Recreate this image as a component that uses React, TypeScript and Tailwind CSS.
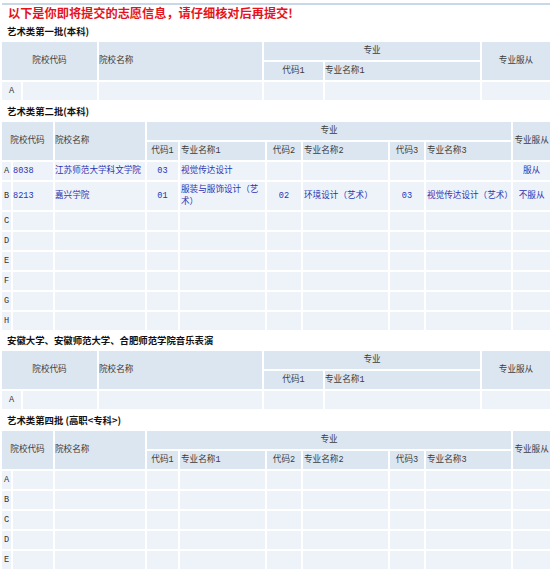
import React from "react";

const CJK = { fontFamily: '"Noto Sans CJK SC", "Noto Sans", sans-serif' };
const TBL = { fontFamily: '"Liberation Mono", "Noto Sans CJK SC", monospace' };

const th = "bg-[#dce6f1] p-0 font-normal text-[#3c3c3c] align-middle";
const td = "bg-[#eef3f9] p-0 align-middle text-[#2b33b3]";

type Major = [string, string];
type Pick = { label: string; code?: string; name?: string; majors?: Major[]; fu?: string; tall?: boolean };

const second: Pick[] = [
  { label: "A", code: "8038", name: "江苏师范大学科文学院", majors: [["03", "视觉传达设计"], ["", ""], ["", ""]], fu: "服从" },
  {
    label: "B",
    code: "8213",
    name: "嘉兴学院",
    majors: [["01", "服装与服饰设计（艺术）"], ["02", "环境设计（艺术）"], ["03", "视觉传达设计（艺术）"]],
    fu: "不服从",
    tall: true,
  },
  { label: "C" },
  { label: "D" },
  { label: "E" },
  { label: "F" },
  { label: "G" },
  { label: "H" },
];

const fourth: Pick[] = [{ label: "A" }, { label: "B" }, { label: "C" }, { label: "D" }, { label: "E" }];

const Heading = ({ children, h }: { children: React.ReactNode; h: string }) => (
  <div className={`${h} flex items-center pl-[7px] text-[9.4px] font-bold text-[#111]`} style={CJK}>
    {children}
  </div>
);

// one major per school
const SingleTable = () => (
  <table className="w-full table-fixed border-separate border-spacing-[2px] text-[8.6px] leading-[12px]" style={TBL}>
    <colgroup>
      <col className="w-[19px]" />
      <col className="w-[74px]" />
      <col className="w-[163px]" />
      <col className="w-[59px]" />
      <col className="w-[155px]" />
      <col className="w-[68px]" />
    </colgroup>
    <thead>
      <tr className="h-[18px]">
        <th colSpan={2} rowSpan={2} className={`${th} text-center`}>院校代码</th>
        <th rowSpan={2} className={`${th} text-left`}>院校名称</th>
        <th colSpan={2} className={`${th} text-center`}>专业</th>
        <th rowSpan={2} className={`${th} text-center`}>专业服从</th>
      </tr>
      <tr className="h-[18px]">
        <th className={`${th} text-center`}>代码1</th>
        <th className={`${th} text-left`}>专业名称1</th>
      </tr>
    </thead>
    <tbody>
      <tr className="h-[18px]">
        <td className={`${td} text-center !text-[#333]`}>A</td>
        <td className={td}></td>
        <td className={td}></td>
        <td className={td}></td>
        <td className={td}></td>
        <td className={td}></td>
      </tr>
    </tbody>
  </table>
);

// three majors per school
const TripleTable = ({ rows }: { rows: Pick[] }) => (
  <table className="w-full table-fixed border-separate border-spacing-[2px] text-[8.6px] leading-[12px]" style={TBL}>
    <colgroup>
      <col className="w-[9px]" />
      <col className="w-[40px]" />
      <col className="w-[90px]" />
      <col className="w-[31px]" />
      <col className="w-[85px]" />
      <col className="w-[34px]" />
      <col className="w-[85px]" />
      <col className="w-[34px]" />
      <col className="w-[85px]" />
      <col className="w-[37px]" />
    </colgroup>
    <thead>
      <tr className="h-[18px]">
        <th colSpan={2} rowSpan={2} className={`${th} text-center`}>院校代码</th>
        <th rowSpan={2} className={`${th} text-left`}>院校名称</th>
        <th colSpan={6} className={`${th} text-center`}>专业</th>
        <th rowSpan={2} className={`${th} text-center`}>专业服从</th>
      </tr>
      <tr className="h-[18px]">
        {[1, 2, 3].map((n) => (
          <React.Fragment key={n}>
            <th className={`${th} text-center whitespace-nowrap`}>代码{n}</th>
            <th className={`${th} text-left pl-[1px]`}>专业名称{n}</th>
          </React.Fragment>
        ))}
      </tr>
    </thead>
    <tbody>
      {rows.map((r) => (
        <tr key={r.label} className={r.tall ? "h-[28px]" : "h-[18px]"}>
          <td className={`${td} text-center !text-[#333]`}>{r.label}</td>
          <td className={td}>{r.code}</td>
          <td className={`${td} whitespace-nowrap`}>{r.name}</td>
          {(r.majors ?? [["", ""], ["", ""], ["", ""]]).map(([c, n], i) => (
            <React.Fragment key={i}>
              <td className={`${td} text-center`}>{c}</td>
              <td className={`${td} pl-[1px]`}>{n}</td>
            </React.Fragment>
          ))}
          <td className={`${td} text-center whitespace-nowrap`}>{r.fu}</td>
        </tr>
      ))}
    </tbody>
  </table>
);

export default function App() {
  return (
    <div className="w-[552px] h-[569px] overflow-hidden bg-white pt-[3px]">
      <div className="mx-[2px] h-[2px] bg-[#c9d8e8]" />
      <div className="h-[17px] flex items-center pl-[8px] text-[12.2px] font-bold text-[#e5141c]" style={CJK}>
        以下是你即将提交的志愿信息，请仔细核对后再提交!
      </div>
      <Heading h="h-[18px]">艺术类第一批(本科)</Heading>
      <SingleTable />
      <Heading h="h-[18px]">艺术类第二批(本科)</Heading>
      <TripleTable rows={second} />
      <Heading h="h-[17px]">安徽大学、安徽师范大学、合肥师范学院音乐表演</Heading>
      <SingleTable />
      <Heading h="h-[18px]">艺术类第四批 (高职&lt;专科&gt;)</Heading>
      <TripleTable rows={fourth} />
    </div>
  );
}
